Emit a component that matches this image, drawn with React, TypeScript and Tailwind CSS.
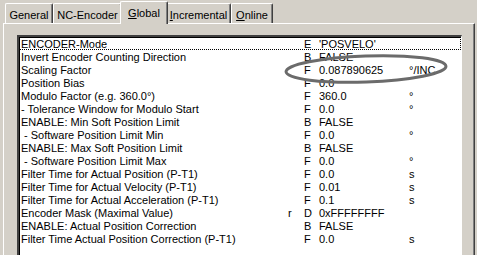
import React from "react";

const rows = [
    { name: "ENCODER-Mode", r: "", type: "E", value: "'POSVELO'", unit: "" },
    { name: "Invert Encoder Counting Direction", r: "", type: "B", value: "FALSE", unit: "" },
    { name: "Scaling Factor", r: "", type: "F", value: "0.087890625", unit: "°/INC" },
    { name: "Position Bias", r: "", type: "F", value: "0.0", unit: "" },
    { name: "Modulo Factor (e.g. 360.0°)", r: "", type: "F", value: "360.0", unit: "°" },
    { name: "- Tolerance Window for Modulo Start", r: "", type: "F", value: "0.0", unit: "°" },
    { name: "ENABLE: Min Soft Position Limit", r: "", type: "B", value: "FALSE", unit: "" },
    { name: " - Software Position Limit Min", r: "", type: "F", value: "0.0", unit: "°" },
    { name: "ENABLE: Max Soft Position Limit", r: "", type: "B", value: "FALSE", unit: "" },
    { name: " - Software Position Limit Max", r: "", type: "F", value: "0.0", unit: "°" },
    { name: "Filter Time for Actual Position (P-T1)", r: "", type: "F", value: "0.0", unit: "s" },
    { name: "Filter Time for Actual Velocity (P-T1)", r: "", type: "F", value: "0.01", unit: "s" },
    { name: "Filter Time for Actual Acceleration (P-T1)", r: "", type: "F", value: "0.1", unit: "s" },
    { name: "Encoder Mask (Maximal Value)", r: "r", type: "D", value: "0xFFFFFFFF", unit: "" },
    { name: "ENABLE: Actual Position Correction", r: "", type: "B", value: "FALSE", unit: "" },
    { name: "Filter Time Actual Position Correction (P-T1)", r: "", type: "F", value: "0.0", unit: "s" },
];

const tabs = [
    { label: "General", u: "", rest: "General", w: "w-[48px]" },
    { label: "NC-Encoder", u: "", rest: "NC-Encoder", w: "w-[69px]" },
    { label: "Global", u: "G", rest: "lobal", w: "w-[44px]", active: true },
    { label: "Incremental", u: "I", rest: "ncremental", w: "w-[65px]" },
    { label: "Online", u: "O", rest: "nline", w: "w-[42px]" },
];

export default function App() {
    return (
        <div className="relative w-[477px] h-[255px] overflow-hidden bg-[#d4d0c8] text-[11px] leading-[13px] text-black font-['Liberation_Sans',Arial,sans-serif]">
            {/* tab strip */}
            <div className="flex items-end h-[23px] pl-[5px]">
                {tabs.map((t, i) =>
                    t.active ? (
                        <div
                            key={i}
                            className="relative z-10 -mx-[2px] w-[48px] h-[23px] -mb-[1px] flex items-start justify-center pt-[5px] bg-[#d4d0c8] border-l border-t border-white border-r border-r-[#404040] shadow-[inset_-1px_0_0_#808080] rounded-t-[2px]"
                        >
                            <span className="underline decoration-1 underline-offset-1">{t.u}</span>
                            <span>{t.rest}</span>
                        </div>
                    ) : (
                        <div
                            key={i}
                            className={`${t.w} h-[20px] flex items-start justify-center pt-[5px] border-l border-t border-white border-r border-r-[#404040] shadow-[inset_-1px_0_0_#808080] rounded-t-[2px]`}
                        >
                            {t.u ? <span className="underline decoration-1 underline-offset-1">{t.u}</span> : null}
                            <span>{t.rest}</span>
                        </div>
                    )
                )}
            </div>

            {/* tab panel */}
            <div className="ml-[3px] mr-[2px] h-[240px] border-t border-l border-white border-r border-r-[#404040] shadow-[inset_-1px_0_0_#808080] pl-[13px] pr-[12px] pt-[11px]">
                <div className="h-[240px] bg-white border-t-2 border-l-2 border-t-[#404040] border-l-[#404040] border-r border-r-white shadow-[inset_1px_1px_0_#000]">
                    {rows.map((r, i) => (
                        <div
                            key={i}
                            className={`grid grid-cols-[268px_16px_15px_90px_1fr] h-[13px] whitespace-pre ${
                                i === 0 ? "border border-dotted border-black -mt-[0px]" : "border border-transparent"
                            }`}
                        >
                            <span className="pl-[1px]">{r.name}</span>
                            <span>{r.r}</span>
                            <span>{r.type}</span>
                            <span>{r.value}</span>
                            <span>{r.unit}</span>
                        </div>
                    ))}
                </div>
            </div>

            {/* highlight ellipse drawn over the list */}
            <svg className="absolute left-[278px] top-[48px] pointer-events-none" width="180" height="42" viewBox="0 0 180 42">
                <ellipse
                    cx="88"
                    cy="21"
                    rx="80"
                    ry="13"
                    fill="none"
                    stroke="#6b6b6b"
                    strokeWidth="3"
                    transform="rotate(-2 88 21)"
                />
            </svg>
        </div>
    );
}
